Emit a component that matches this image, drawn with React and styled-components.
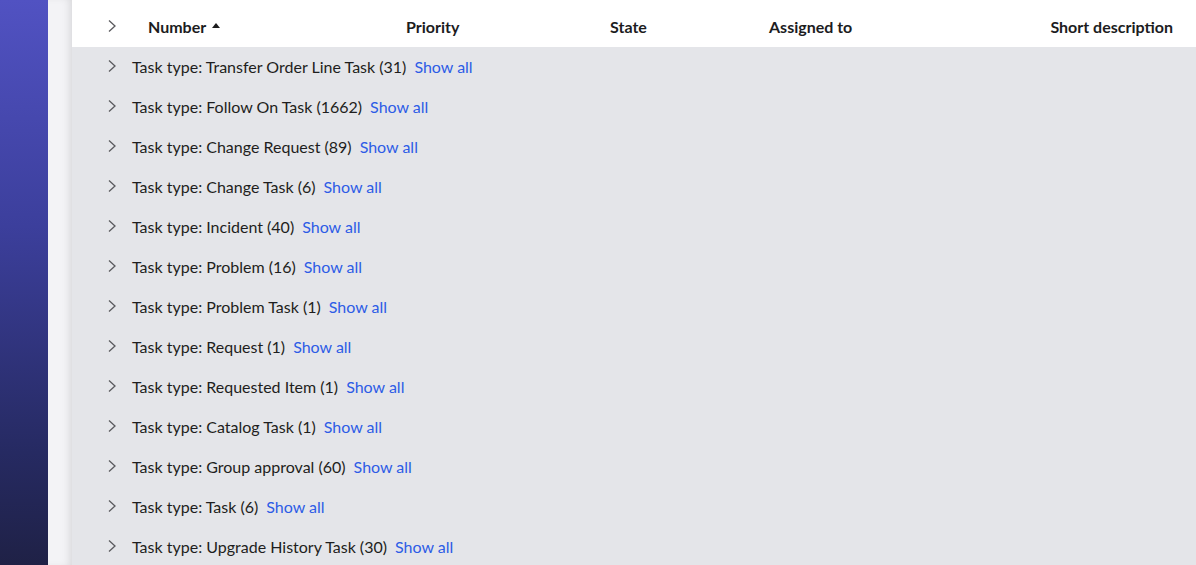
import React from 'react';
import styled, { createGlobalStyle } from 'styled-components';

const groups = [
  ['Transfer Order Line Task', 31],
  ['Follow On Task', 1662],
  ['Change Request', 89],
  ['Change Task', 6],
  ['Incident', 40],
  ['Problem', 16],
  ['Problem Task', 1],
  ['Request', 1],
  ['Requested Item', 1],
  ['Catalog Task', 1],
  ['Group approval', 60],
  ['Task', 6],
  ['Upgrade History Task', 30],
];

const Chevron = () => (
  <svg width="10" height="14" viewBox="0 0 10 14">
    <path d="M2 1.5 L8 7 L2 12.5" fill="none" stroke="#5a5a5e" strokeWidth="1.3" />
  </svg>
);

const App = () => {
  return (
    <>
      <GlobalStyle />
      <Page>
        <Sidebar />
        <Gutter />
        <Main>
          <Header>
            <HeadChevron>
              <Chevron />
            </HeadChevron>
            <HeadCell>
              Number <SortArrow />
            </HeadCell>
            <HeadCell>Priority</HeadCell>
            <HeadCell>State</HeadCell>
            <HeadCell>Assigned to</HeadCell>
            <HeadCell align="right">Short description</HeadCell>
          </Header>
          {groups.map(([name, count]) => (
            <Row key={name}>
              <Chevron />
              <Label>
                Task type: {name} ({count})
              </Label>
              <ShowAll href="#">Show all</ShowAll>
            </Row>
          ))}
        </Main>
      </Page>
    </>
  );
};

const GlobalStyle = createGlobalStyle`
  body {
    margin: 0;
    font-family: Lato, "Noto Sans", sans-serif;
    background: #e4e5e9;
    overflow: hidden;
  }
`;

const Page = styled.div`
  display: flex;
  height: 565px;
  overflow: hidden;
`;

const Sidebar = styled.div`
  width: 48px;
  flex-shrink: 0;
  background: linear-gradient(180deg, #5152c2 0%, #3c3f9c 40%, #262a62 80%, #1f2146 100%);
`;

const Gutter = styled.div`
  width: 24px;
  flex-shrink: 0;
  background: #f3f3f6;
  box-shadow: inset -6px 0 8px -4px rgba(0, 0, 0, 0.12);
`;

const Main = styled.div`
  flex: 1;
  display: flex;
  flex-direction: column;
  background: #e4e5e9;
`;

const Header = styled.div`
  display: grid;
  grid-template-columns: 76px 258px 204px 159px 1fr auto;
  align-items: center;
  height: 47px;
  padding: 5px 23px 0 0;
  box-sizing: border-box;
  background: #fff;
  flex-shrink: 0;
`;

const HeadChevron = styled.div`
  padding-left: 35px;
  display: flex;
  align-items: center;
`;

const HeadCell = styled.div`
  font-size: 16px;
  font-weight: 700;
  color: #1c1c1e;
  white-space: nowrap;
  display: flex;
  align-items: center;
  justify-content: ${p => (p.align === 'right' ? 'flex-end' : 'flex-start')};
  gap: 6px;
`;

const SortArrow = styled.span`
  width: 0;
  height: 0;
  border-left: 4px solid transparent;
  border-right: 4px solid transparent;
  border-bottom: 5px solid #1c1c1e;
  margin-top: -2px;
`;

const Row = styled.div`
  display: flex;
  align-items: center;
  height: 40px;
  box-sizing: border-box;
  padding: 0 0 2px 35px;
  flex-shrink: 0;
  gap: 15px;
`;

const Label = styled.span`
  font-size: 16px;
  color: #1e1e20;
  margin-right: -7px;
  white-space: nowrap;
`;

const ShowAll = styled.a`
  font-size: 16px;
  color: #2d5ce6;
  text-decoration: none;
  white-space: nowrap;
`;

export default App;
